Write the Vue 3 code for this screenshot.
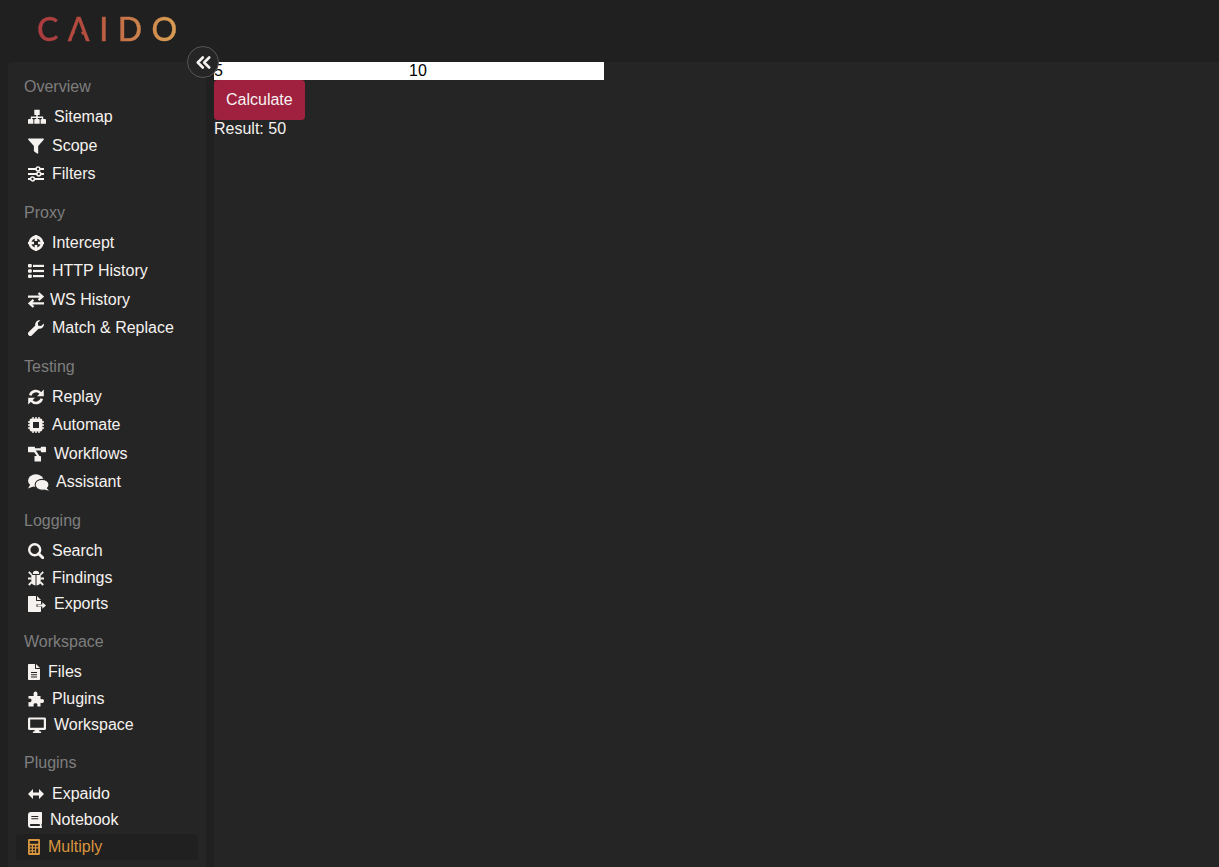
<script setup>
import { ref } from 'vue'

const a = ref('5')
const b = ref('10')

const sections = [
  { title: 'Overview', size: 'tall', items: [
    { label: 'Sitemap', icon: 'sitemap', w: 18 },
    { label: 'Scope', icon: 'filter', w: 16 },
    { label: 'Filters', icon: 'sliders', w: 16 },
  ] },
  { title: 'Proxy', size: 'tall', items: [
    { label: 'Intercept', icon: 'crosshairs', w: 16 },
    { label: 'HTTP History', icon: 'list', w: 16 },
    { label: 'WS History', icon: 'exchange', w: 14 },
    { label: 'Match & Replace', icon: 'wrench', w: 16 },
  ] },
  { title: 'Testing', size: 'tall', items: [
    { label: 'Replay', icon: 'sync', w: 16 },
    { label: 'Automate', icon: 'chip', w: 16 },
    { label: 'Workflows', icon: 'diagram', w: 18 },
    { label: 'Assistant', icon: 'comments', w: 20 },
  ] },
  { title: 'Logging', size: 'short', items: [
    { label: 'Search', icon: 'search', w: 16 },
    { label: 'Findings', icon: 'bug', w: 16 },
    { label: 'Exports', icon: 'fileExport', w: 18 },
  ] },
  { title: 'Workspace', size: 'short', items: [
    { label: 'Files', icon: 'file', w: 12 },
    { label: 'Plugins', icon: 'puzzle', w: 16 },
    { label: 'Workspace', icon: 'desktop', w: 18 },
  ] },
  { title: 'Plugins', size: 'short', items: [
    { label: 'Expaido', icon: 'arrows', w: 16 },
    { label: 'Notebook', icon: 'book', w: 14 },
    { label: 'Multiply', icon: 'calculator', w: 12, active: true },
  ] },
]
</script>

<template>
  <div class="app">
    <header class="topbar">
      <div class="logo">CAIDO</div>
    </header>
    <div class="body">
      <aside class="sidebar">
        <button class="collapse" aria-label="Collapse">
          <svg width="15" height="13" viewBox="0 0 15 13" fill="none" stroke="currentColor" stroke-width="2.600" stroke-linecap="round" stroke-linejoin="round">
            <path d="M6.800 1.500 1.800 6.500l5 5M13.200 1.500l-5 5 5 5" />
          </svg>
        </button>
        <section v-for="s in sections" :key="s.title" class="group" :class="s.size">
          <h3 class="group-title">{{ s.title }}</h3>
          <a v-for="item in s.items" :key="item.label" class="row" :class="{ active: item.active }">
            <span class="icon" :style="{ width: item.w + 'px' }">
              <svg v-if="item.icon === 'sitemap'" viewBox="0 0 18 16" width="18" height="16" fill="currentColor">
                <path d="M6.300 .8h5.400v5.200H9.800v1.500H15.200v2.800h-1.400V9.100H9.800v1.100H8.200V9.100H4.200v1.100H2.800V7.500h5.400V6H6.300z" />
                <path d="M0 11a1 1 0 0 1 1-1h3.400a1 1 0 0 1 1 1v3.800H0zM6.300 11a1 1 0 0 1 1-1h3.400a1 1 0 0 1 1 1v3.800H6.300zM12.600 11a1 1 0 0 1 1-1H17a1 1 0 0 1 1 1v3.800h-5.400z" />
              </svg>
              <svg v-else-if="item.icon === 'filter'" viewBox="0 0 16 16" width="16" height="16" fill="currentColor">
                <path d="M.8.500h14.400c.7 0 1 .8.500 1.300L10.200 8v7c0 .6-.7 1-1.200.6L6.300 13.500a.8.800 0 0 1-.4-.6V8L.3 1.800C-.2 1.300.1.500.8.500z" />
              </svg>
              <svg v-else-if="item.icon === 'sliders'" viewBox="0 0 16 16" width="16" height="16" fill="none" stroke="currentColor" stroke-width="1.800">
                <path d="M0 3h16M0 8h16M0 13h16" />
                <circle cx="10" cy="3" r="1.900" fill="#252525" stroke-width="1.500" />
                <circle cx="10.800" cy="8" r="1.900" fill="#252525" stroke-width="1.500" />
                <circle cx="4.500" cy="13" r="1.900" fill="#252525" stroke-width="1.500" />
              </svg>
              <svg v-else-if="item.icon === 'crosshairs'" viewBox="0 0 16 16" width="16" height="16">
                <circle cx="8" cy="8" r="6" fill="none" stroke="currentColor" stroke-width="2.800" />
                <path d="M8 0v6M8 10v6M0 8h6M10 8h6" stroke="currentColor" stroke-width="2.600" />
              </svg>
              <svg v-else-if="item.icon === 'list'" viewBox="0 0 16 16" width="16" height="16" fill="currentColor">
                <rect x="0" y="1" width="3.800" height="3.600" rx="1" />
                <rect x="0" y="6.200" width="3.800" height="3.600" rx="1" />
                <rect x="0" y="11.400" width="3.800" height="3.600" rx="1" />
                <rect x="5" y="1.800" width="11" height="2.200" />
                <rect x="5" y="6.900" width="11" height="2.200" />
                <rect x="5" y="12" width="11" height="2.200" />
              </svg>
              <svg v-else-if="item.icon === 'exchange'" viewBox="0 0 16 16" width="16" height="16" fill="none" stroke="currentColor" stroke-width="2.300">
                <path d="M0 4.600h14M10.500 1l4 3.600-4 3.600M16 11.400H2M5.500 7.800l-4 3.600 4 3.600" />
              </svg>
              <svg v-else-if="item.icon === 'wrench'" viewBox="0 0 16 16" width="16" height="16" fill="currentColor">
                <path d="M15.800 3.600c.3 1.400-.1 2.900-1.200 4-1.100 1.100-2.700 1.500-4.100 1.100L4 15.300a2.300 2.300 0 0 1-3.300-3.300l6.600-6.500c-.4-1.400 0-3 1.100-4.100C9.500.3 11 0 12.400.2L9.800 2.800l.4 2.900 2.900.4z" />
              </svg>
              <svg v-else-if="item.icon === 'sync'" viewBox="0 0 16 16" width="16" height="16">
                <path d="M2.200 6.300A6 6 0 0 1 12.600 4.200M13.800 9.700A6 6 0 0 1 3.400 11.800" fill="none" stroke="currentColor" stroke-width="2.600" />
                <path d="M15.800.5v6.800H9zM.2 15.500V8.700H7z" fill="currentColor" />
              </svg>
              <svg v-else-if="item.icon === 'chip'" viewBox="0 0 16 16" width="16" height="16">
                <path d="M3.500 1.600h9c1 0 1.900.9 1.900 1.900v9c0 1-.9 1.900-1.900 1.900h-9c-1 0-1.900-.9-1.900-1.900v-9c0-1 .9-1.900 1.900-1.900zM5 5v6h6V5z" fill="currentColor" fill-rule="evenodd" />
                <path d="M5 0v2M8 0v2M11 0v2M5 14v2M8 14v2M11 14v2M0 5h2M0 8h2M0 11h2M14 5h2M14 8h2M14 11h2" stroke="currentColor" stroke-width="1.400" />
              </svg>
              <svg v-else-if="item.icon === 'diagram'" viewBox="0 0 18 16" width="18" height="16" fill="currentColor">
                <rect x="0" y=".8" width="7" height="5.400" rx=".6" />
                <rect x="12.800" y=".8" width="5.200" height="5.400" rx=".6" />
                <rect x="6.500" y="10" width="6.500" height="5.600" rx=".6" />
                <path d="M5 2.300h8.500v2.200H7.800l3.800 5.800H9L5 4.500z" />
              </svg>
              <svg v-else-if="item.icon === 'comments'" viewBox="0 0 20 16" width="21" height="17" fill="currentColor">
                <ellipse cx="7.500" cy="6.200" rx="7.500" ry="6" />
                <path d="M2.500 9.500 0 13.800l5-2z" />
                <ellipse cx="13.400" cy="10.200" rx="6.600" ry="5.200" stroke="#252525" stroke-width="1" />
                <path d="M17 12.500l3 3.400-5.500-1.500z" />
              </svg>
              <svg v-else-if="item.icon === 'search'" viewBox="0 0 16 16" width="16" height="16" fill="none" stroke="currentColor">
                <circle cx="6.700" cy="6.700" r="5.500" stroke-width="2.400" />
                <path d="m10.700 10.700 4.100 4.100" stroke-width="3" stroke-linecap="round" />
              </svg>
              <svg v-else-if="item.icon === 'bug'" viewBox="0 0 16 16" width="16" height="16" fill="currentColor">
                <path d="M4.800 4a3.200 3.200 0 0 1 6.400 0z" />
                <path d="M3.300 5h4.200v10.500c-2.400-.2-4.200-1.900-4.200-4.500zM8.500 5h4.200v6c0 2.600-1.800 4.300-4.200 4.500z" />
                <path d="M.8 1.800 3.800 5M15.200 1.800 12.200 5M0 8.500h3.500M16 8.500h-3.500M.8 15 3.800 12M15.200 15l-3-3" stroke="currentColor" stroke-width="1.800" />
              </svg>
              <svg v-else-if="item.icon === 'fileExport'" viewBox="0 0 18 16" width="18" height="16" fill="currentColor">
                <path d="M.7 0H8v4.300c0 .4.300.7.700.7H13v3.300H8.500v2.400H13v4.600c0 .4-.3.700-.7.700H.7a.7.700 0 0 1-.7-.7V.7C0 .3.300 0 .7 0z" />
                <path d="M9 0 13 4H9z" />
                <path d="M9.500 8.500h4.800V6.300L18 9.500l-3.700 3.200v-2.200H9.500z" />
              </svg>
              <svg v-else-if="item.icon === 'file'" viewBox="0 0 12 16" width="12" height="16" fill="currentColor">
                <path d="M.7 0H7v4.300c0 .4.300.7.700.7H12v10.300c0 .4-.3.700-.7.700H.7a.7.700 0 0 1-.7-.7V.7C0 .3.300 0 .7 0zM3 8v1h6V8zm0 2.200v1h6v-1zm0 2.200v1h6v-1z" fill-rule="evenodd" />
                <path d="M8 0 12 4H8z" />
              </svg>
              <svg v-else-if="item.icon === 'puzzle'" viewBox="0 0 16 16" width="16" height="16" fill="currentColor">
                <path d="M5.500 3.500C5.500 2.200 6 .5 7.500.5s2 1.700 2 3c0 .5-.3.800-.3 1.100 0 .3.300.4.600.4h2.700v2.800c0 .3.200.5.500.5.300 0 .6-.3 1.100-.3 1.300 0 1.900.7 1.900 2s-.6 2-1.900 2c-.5 0-.8-.3-1.100-.3-.3 0-.5.200-.5.500v3.300H9.800c-.3 0-.6-.2-.6-.5s.3-.7.300-1.200c0-1-.8-1.600-2-1.600s-2 .6-2 1.600c0 .5.300.9.300 1.200 0 .3-.2.500-.5.500H.5v-4.200c0-.3.200-.4.400-.4.400 0 .7.300 1.200.3C3 11.200 3.500 10.400 3.500 9.300S3 7.400 2.100 7.400c-.5 0-.8.300-1.200.3-.2 0-.4-.2-.4-.4V5h4.700c.3 0 .6-.1.600-.4 0-.3-.3-.6-.3-1.100z" />
              </svg>
              <svg v-else-if="item.icon === 'desktop'" viewBox="0 0 18 16" width="18" height="16" fill="currentColor">
                <path d="M1.500.5h15c.8 0 1.500.7 1.500 1.500v9.500c0 .8-.7 1.500-1.500 1.500H1.500C.7 13 0 12.300 0 11.500V2C0 1.200.7.500 1.500.5zM2.200 2.600v8.200h13.600V2.600z" fill-rule="evenodd" />
                <path d="M6.800 13h4.400l.4 1.400h1.500v1.500H4.900v-1.500h1.500z" />
              </svg>
              <svg v-else-if="item.icon === 'arrows'" viewBox="0 0 16 16" width="16" height="16" fill="currentColor">
                <path d="M5 3 0 8l5 5V9.500h6V13l5-5-5-5v3.500H5z" />
              </svg>
              <svg v-else-if="item.icon === 'book'" viewBox="0 0 14 16" width="14" height="16" fill="currentColor">
                <path d="M3 0h10.300c.4 0 .7.300.7.700v10.600c0 .3-.2.500-.4.600-.2.500-.2 1.600 0 2.200.2.100.4.300.4.600v.6c0 .4-.3.700-.7.700H3a3 3 0 0 1-3-3V3a3 3 0 0 1 3-3zM3.300 4v1h7V4zm0 2.300v1h7v-1zM2.800 12c-.5 0-.9.400-.9 1s.4 1 .9 1h9c-.1-.6-.1-1.400 0-2z" fill-rule="evenodd" />
              </svg>
              <svg v-else-if="item.icon === 'calculator'" viewBox="0 0 12 16" width="12" height="16" fill="currentColor">
                <path d="M1.200 0h9.600C11.500 0 12 .5 12 1.200v13.600c0 .7-.5 1.200-1.200 1.200H1.200C.5 16 0 15.500 0 14.800V1.200C0 .5.500 0 1.200 0zM1.800 2v2.800h8.400V2zm0 4.500v1.800h2V6.500zm3.200 0v1.800h2V6.500zm3.200 0v1.800h2V6.500zm-6.400 3v1.800h2V9.500zm3.200 0v1.800h2V9.500zm3.200 0V14h2V9.500zm-6.400 3V14h2v-1.500zm3.200 0V14h2v-1.500z" fill-rule="evenodd" />
              </svg>
            </span>
            <span class="label">{{ item.label }}</span>
          </a>
        </section>
      </aside>
      <main class="main">
        <div class="inputs">
          <input v-model="a" class="num" type="text" />
          <input v-model="b" class="num" type="text" />
        </div>
        <button class="calc">Calculate</button>
        <div class="result">Result: 50</div>
      </main>
    </div>
  </div>
</template>

<style>
html, body { margin: 0; background: #202020; }
</style>

<style scoped>
.app {
  width: 1219px;
  height: 867px;
  overflow: hidden;
  display: flex;
  flex-direction: column;
  background: #202020;
  font-family: "Liberation Sans", Arial, sans-serif;
  font-size: 16px;
  line-height: 18px;
  color: #f5f2ef;
}
.topbar {
  height: 62px;
  flex: none;
  padding-left: 37px;
  display: flex;
  align-items: center;
}
.logo {
  position: relative;
  font-family: Lato, sans-serif;
  font-size: 32px;
  font-weight: 500;
  line-height: 36px;
  letter-spacing: 9.500px;
  margin-top: -4px;
  background: linear-gradient(90deg, #ad3a3f 0%, #b5503f 35%, #cc7f4b 65%, #dea556 100%);
  -webkit-background-clip: text;
  background-clip: text;
  color: transparent;
  -webkit-text-stroke: 0.4px #b8663f00;
}
/* the wordmark's A has no crossbar */
.logo::after {
  content: "";
  position: absolute;
  left: 34px;
  width: 14px;
  top: 19px;
  height: 9.500px;
  background: #202020;
  clip-path: polygon(35% 0, 65% 0, 95% 100%, 5% 100%);
}
.body {
  flex: 1;
  display: flex;
  min-height: 0;
  padding-left: 8px;
  gap: 8px;
}
.sidebar {
  position: relative;
  width: 198px;
  flex: none;
  box-sizing: border-box;
  padding: 16px 8px 0;
  background: #252525;
  border-radius: 4px 4px 0 0;
}
.collapse {
  position: absolute;
  left: 179px;
  top: -16px;
  z-index: 2;
  width: 32px;
  height: 32px;
  padding: 0;
  border: 1px solid #565656;
  border-radius: 50%;
  background: #252525;
  color: #f5f2ef;
  display: flex;
  align-items: center;
  justify-content: center;
}
.group + .group {
  margin-top: 15px;
}
.group:last-of-type {
  margin-top: 15.500px;
}
.group-title {
  margin: 0 0 7px;
  padding-left: 8px;
  font-size: 16px;
  font-weight: 400;
  line-height: 18px;
  color: #7e7e7e;
}
.short .group-title {
  margin-bottom: 8.500px;
}
.row {
  display: flex;
  align-items: center;
  gap: 8px;
  padding-left: 12px;
  border-radius: 4px;
}
.tall .row { height: 28.500px; }
.short .row { height: 26.500px; }
.icon {
  flex: none;
  height: 16px;
  display: flex;
  color: currentColor;
}
.icon svg { display: block; flex: none; }
.row.active {
  background: #202020;
  color: #d9963f;
}
.main {
  flex: 1;
  background: #252525;
}
.inputs {
  display: flex;
  height: 18px;
}
.num {
  width: 195px;
  height: 18px;
  box-sizing: border-box;
  border: 0;
  padding: 0;
  margin: 0;
  outline: 0;
  background: #fff;
  color: #000;
  font: 16px/18px "Liberation Sans", Arial, sans-serif;
}
.calc {
  display: block;
  height: 40px;
  padding: 0 12px;
  border: 0;
  border-radius: 4px;
  background: #a0203f;
  color: #f5f2ef;
  font: 16px/18px "Liberation Sans", Arial, sans-serif;
}
.result {
  height: 18px;
}
</style>
